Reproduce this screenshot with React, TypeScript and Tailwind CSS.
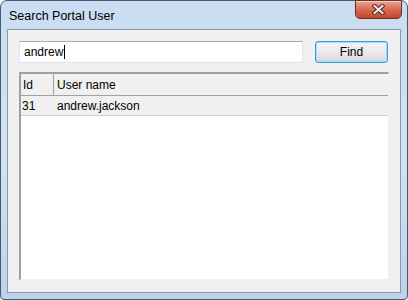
export default function App() {
  return (
    <div className="w-[408px] h-[300px] bg-white font-['Liberation_Sans',Arial,sans-serif] text-[12px] text-black">
      <div className="w-full h-full flex flex-col rounded-t-[7px] rounded-b-[4px] border border-[#4a5868] bg-gradient-to-b from-[#c9dcf1] via-[#d3e3f4] to-[#bcd3ec] px-[6px] pb-[6px]">
        <div className="h-[28px] flex items-start justify-between">
          <span className="mt-[6px] ml-[2px] text-[12.5px] text-black">Search Portal User</span>
          <button className="w-[47px] h-[19px] -mt-px mr-[-1px] flex items-center justify-center rounded-b-[5px] border border-[#6e3026] bg-gradient-to-b from-[#e9a795] via-[#d56a52] to-[#c7442a] shadow-[inset_0_1px_0_rgba(255,255,255,0.5)]">
            <svg width="15" height="11" viewBox="0 0 15 11">
              <path d="M3.5 2 L11.5 9 M11.5 2 L3.5 9" stroke="#5b2a22" strokeWidth="4" strokeLinecap="square" />
              <path d="M3.5 2 L11.5 9 M11.5 2 L3.5 9" stroke="#eeeeee" strokeWidth="2" strokeLinecap="square" />
            </svg>
          </button>
        </div>
        <div className="flex-1 flex flex-col border border-[#8a98a8] bg-[#f0f0f0] pt-[11px] px-[11px] pb-[12px]">
          <div className="flex items-center gap-[12px]">
            <div className="w-[284px] h-[22px] flex items-center border border-[#e2e3ea] border-t-[#abadb3] bg-white pl-[4px]">
              <span>andrew</span>
              <span className="w-px h-[14px] bg-black ml-px" />
            </div>
            <button className="w-[73px] h-[22px] rounded-[3px] border border-[#3c9fdc] bg-gradient-to-b from-[#f2f2f2] via-[#ebebeb] to-[#d8d8d8] shadow-[inset_0_0_0_1px_#9fdcf8] text-[12px]">
              Find
            </button>
          </div>
          <div className="mt-[9px] flex-1 flex flex-col border border-[#f0f0f0] border-t-[#a0a0a0] border-l-[#a0a0a0] border-t-2 border-l-2 bg-white">
            <div className="h-[22px] flex items-center border-b border-[#a0a0a0] bg-[#f0f0f0]">
              <div className="w-[33px] h-full flex items-center border-r border-[#a0a0a0] pl-[2px]">Id</div>
              <div className="pl-[3px]">User name</div>
            </div>
            <div className="h-[20px] flex items-center border-b border-[#d0d0d0] bg-[#f0f0f0]">
              <div className="w-[34px] pl-[1px]">31</div>
              <div className="pl-[2px]">andrew.jackson</div>
            </div>
          </div>
        </div>
      </div>
    </div>
  );
}
